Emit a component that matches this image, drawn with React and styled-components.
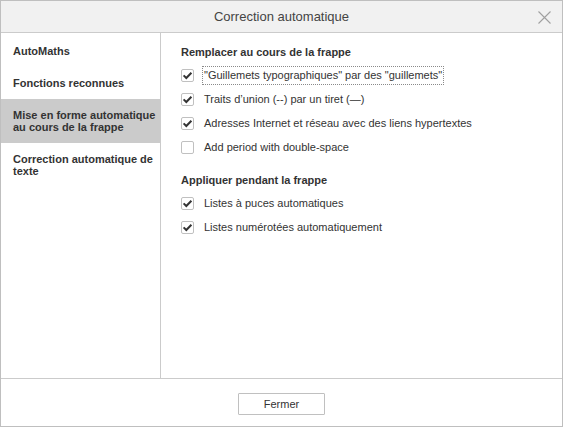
import styled, { createGlobalStyle } from 'styled-components';

const GlobalStyle = createGlobalStyle`
  html, body {
    margin: 0;
    padding: 0;
    background: #fff;
  }
  body {
    font-family: "Liberation Sans", Arial, sans-serif;
    color: #444;
  }
  * {
    box-sizing: border-box;
  }
`;

const Dialog = styled.div`
  width: 563px;
  height: 427px;
  border: 1px solid #bfbfbf;
  display: flex;
  flex-direction: column;
  background: #fff;
`;

const Header = styled.div`
  position: relative;
  height: 32px;
  flex-shrink: 0;
  background: #f1f1f1;
  border-bottom: 1px solid #cbcbcb;
  display: flex;
  align-items: center;
  justify-content: center;
`;

const Title = styled.div`
  font-size: 13px;
  color: #444;
`;

const CloseButton = styled.button`
  position: absolute;
  right: 11px;
  top: 9px;
  width: 14px;
  height: 14px;
  padding: 0;
  border: 0;
  background: transparent;
  display: flex;
  align-items: center;
  justify-content: center;
`;

const Body = styled.div`
  flex: 1;
  display: flex;
  min-height: 0;
`;

const Sidebar = styled.div`
  width: 160px;
  flex-shrink: 0;
  border-right: 1px solid #cbcbcb;
  padding-top: 2px;
`;

const NavItem = styled.div`
  padding: 10px 0 10px 12px;
  font-size: 11px;
  font-weight: bold;
  line-height: 12px;
  color: #333;
  background: ${props => (props.$active ? '#cbcbcb' : 'transparent')};
`;

const Content = styled.div`
  flex: 1;
  padding: 12px 20px;
`;

const Group = styled.div`
  & + & {
    margin-top: 14px;
  }
`;

const GroupTitle = styled.div`
  font-size: 11px;
  font-weight: bold;
  line-height: 14px;
  margin-bottom: 4px;
  color: #333;
`;

const Row = styled.label`
  display: flex;
  align-items: center;
  height: 24px;
  font-size: 11px;
  color: #333;
`;

const Box = styled.span`
  width: 13px;
  height: 13px;
  border: 1px solid #c0c0c0;
  border-radius: 2px;
  background: #fff;
  margin-right: 10px;
  flex-shrink: 0;
  display: flex;
  align-items: center;
  justify-content: center;
`;

const Label = styled.span`
  padding: 2px 1px;
  margin-left: -2px;
  border: 1px dotted ${props => (props.$focused ? '#8a8a8a' : 'transparent')};
  line-height: 13px;
`;

const Footer = styled.div`
  height: 48px;
  flex-shrink: 0;
  border-top: 1px solid #cbcbcb;
  display: flex;
  justify-content: center;
  padding-top: 14px;
`;

const Button = styled.button`
  width: 87px;
  height: 22px;
  border: 1px solid #c0c0c0;
  border-radius: 1px;
  background: #fff;
  font-family: "Liberation Sans", Arial, sans-serif;
  font-size: 11px;
  color: #333;
  padding: 0;
`;

const Check = () => (
  <svg width="11" height="11" viewBox="0 0 11 11">
    <path d="M1.6 5.4 L4.3 8 L9.4 2.8" fill="none" stroke="#333" strokeWidth="2" />
  </svg>
);

const Checkbox = ({ checked, children, focused }) => (
  <Row>
    <Box>{checked && <Check />}</Box>
    <Label $focused={focused}>{children}</Label>
  </Row>
);

const navItems = [
  { label: 'AutoMaths' },
  { label: 'Fonctions reconnues' },
  { label: 'Mise en forme automatique au cours de la frappe', active: true },
  { label: 'Correction automatique de texte' },
];

const groups = [
  {
    title: 'Remplacer au cours de la frappe',
    options: [
      { label: '"Guillemets typographiques" par des "guillemets"', checked: true, focused: true },
      { label: 'Traits d’union (--) par un tiret (—)', checked: true },
      { label: 'Adresses Internet et réseau avec des liens hypertextes', checked: true },
      { label: 'Add period with double-space', checked: false },
    ],
  },
  {
    title: 'Appliquer pendant la frappe',
    options: [
      { label: 'Listes à puces automatiques', checked: true },
      { label: 'Listes numérotées automatiquement', checked: true },
    ],
  },
];

const App = () => (
  <>
    <GlobalStyle />
    <Dialog>
      <Header>
        <Title>Correction automatique</Title>
        <CloseButton aria-label="Fermer">
          <svg width="13" height="13" viewBox="0 0 13 13">
            <path d="M0.5 0.5 L12.5 12.5 M12.5 0.5 L0.5 12.5" stroke="#a0a0a0" strokeWidth="1.1" />
          </svg>
        </CloseButton>
      </Header>
      <Body>
        <Sidebar>
          {navItems.map(item => (
            <NavItem key={item.label} $active={item.active}>
              {item.label}
            </NavItem>
          ))}
        </Sidebar>
        <Content>
          {groups.map(group => (
            <Group key={group.title}>
              <GroupTitle>{group.title}</GroupTitle>
              {group.options.map(opt => (
                <Checkbox key={opt.label} checked={opt.checked} focused={opt.focused}>
                  {opt.label}
                </Checkbox>
              ))}
            </Group>
          ))}
        </Content>
      </Body>
      <Footer>
        <Button>Fermer</Button>
      </Footer>
    </Dialog>
  </>
);

export default App;
